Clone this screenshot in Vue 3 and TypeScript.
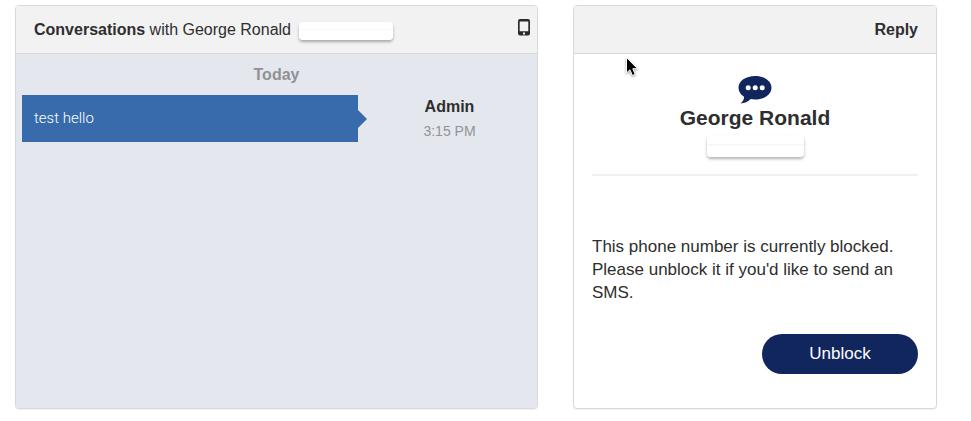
<script setup lang="ts">
import { ref } from 'vue'

interface Message {
  id: number
  text: string
  author: string
  time: string
}

const contact = 'George Ronald'
const messages = ref<Message[]>([
  { id: 1, text: 'test hello', author: 'Admin', time: '3:15 PM' },
])
</script>

<template>
  <main class="page">
    <section class="panel conversation">
      <header class="panel-head">
        <h1 class="title">
          <strong>Conversations</strong> with {{ contact }}
        </h1>
        <span class="redacted"></span>
        <svg class="phone" viewBox="0 0 12 17" aria-hidden="true">
          <path
            fill="#2b2b2b"
            fill-rule="evenodd"
            d="M2 0h8a2 2 0 0 1 2 2v12.500a2 2 0 0 1-2 2H2a2 2 0 0 1-2-2V2a2 2 0 0 1 2-2zM1.700 2.500v9.800h8.600V2.500zM5 13.400v2h2v-2z"
          />
        </svg>
      </header>
      <div class="thread">
        <h2 class="day">Today</h2>
        <article v-for="message in messages" :key="message.id" class="message">
          <p class="bubble">{{ message.text }}</p>
          <div class="meta">
            <strong class="author">{{ message.author }}</strong>
            <time class="time">{{ message.time }}</time>
          </div>
        </article>
      </div>
    </section>

    <section class="panel reply">
      <header class="panel-head panel-head-end">
        <h2 class="title"><strong>Reply</strong></h2>
      </header>
      <div class="reply-body">
        <div class="contact">
          <svg class="chat" viewBox="0 0 34 28" aria-hidden="true">
            <path
              fill="#12265e"
              d="M17 0C26.200 0 33.500 5 33.500 11.700S26.200 23.500 17 23.500c-1.500 0-2.900-.1-4.200-.4C10 25.800 6.600 27.500 2.700 27.500c1.900-1.700 3.400-4 3.400-6.700C2.600 18.600.5 15.400.5 11.700.5 5 7.800 0 17 0z"
            />
            <g fill="#fff">
              <circle cx="10.200" cy="11.800" r="2.500" />
              <circle cx="17.200" cy="11.800" r="2.500" />
              <circle cx="24.200" cy="11.800" r="2.500" />
            </g>
          </svg>
          <h3 class="contact-name">{{ contact }}</h3>
          <span class="redacted redacted-tall"></span>
        </div>
        <p class="notice">
          This phone number is currently blocked. Please unblock it if you'd
          like to send an SMS.
        </p>
        <button type="button" class="unblock">Unblock</button>
      </div>
    </section>

    <svg class="pointer" viewBox="0 0 14 22" aria-hidden="true">
      <path
        fill="#000"
        stroke="#fff"
        stroke-width="1"
        d="M1.500 1.500v15.500l3.400-3.200 2.500 5.700 2.800-1.200-2.400-5.600h4.700z"
      />
    </svg>
  </main>
</template>

<style>
body {
  margin: 0;
  background: #fff;
}
</style>

<style scoped>
.page {
  position: relative;
  box-sizing: border-box;
  min-height: 100vh;
  display: grid;
  grid-template-columns: 523fr 364fr;
  gap: 35px;
  padding: 5px 34px 12px 15px;
  font-family: "Liberation Sans", Arial, sans-serif;
  font-size: 16px;
  color: #2e2e2e;
}

.panel {
  display: flex;
  flex-direction: column;
  min-width: 0;
  border: 1px solid #d9d9d9;
  border-radius: 4px;
  box-shadow: 0 1px 1px rgba(0, 0, 0, 0.06);
  overflow: hidden;
  background: #fff;
}

.panel-head {
  display: flex;
  align-items: center;
  gap: 8px;
  height: 47px;
  padding: 0 7px 0 18px;
  border-bottom: 1px solid #d6d7d9;
  background: #f2f2f2;
}

.panel-head-end {
  justify-content: flex-end;
  padding-right: 18px;
}

.title {
  margin: 0;
  font-size: 16px;
  font-weight: 400;
  line-height: 24px;
}

.redacted {
  box-sizing: border-box;
  width: 94px;
  height: 18px;
  margin-top: 2px;
  border-radius: 4px;
  background: linear-gradient(#fff 7px, #f7f7f7 7px, #fff 9px);
  box-shadow: 0 2px 3px rgba(0, 0, 0, 0.3);
}

.phone {
  width: 12px;
  height: 17px;
  margin: 0 0 4px auto;
}

.thread {
  flex: 1;
  padding: 9px 0 0 6px;
  background: #e4e7ee;
}

.day {
  margin: 0 6px 8px 0;
  font-size: 16px;
  line-height: 24px;
  text-align: center;
  color: #909193;
}

.message {
  display: grid;
  grid-template-columns: 336fr 175fr;
  gap: 4px;
  align-items: start;
}

.bubble {
  position: relative;
  margin: 0;
  padding: 12px;
  font-family: Roboto, "Liberation Sans", sans-serif;
  font-size: 15px;
  font-weight: 300;
  line-height: 23px;
  color: #fff;
  background: #376bac;
}

.bubble::after {
  content: "";
  position: absolute;
  top: 50%;
  left: 100%;
  border: 9px solid transparent;
  border-left-color: #376bac;
  border-right-width: 0;
  transform: translateY(-50%);
}

.meta {
  display: flex;
  flex-direction: column;
  align-items: center;
}

.author {
  line-height: 24px;
}

.time {
  font-size: 14px;
  line-height: 24px;
  color: #929396;
}

.reply-body {
  display: flex;
  flex: 1;
  flex-direction: column;
  padding: 22px 18px 34px;
}

.contact {
  display: flex;
  flex-direction: column;
  align-items: center;
  padding-bottom: 17px;
  border-bottom: 2px solid #f0f0f0;
}

.chat {
  width: 34px;
  height: 28px;
}

.contact-name {
  margin: 0;
  font-size: 21px;
  line-height: 27px;
}

.redacted-tall {
  width: 97px;
  height: 22px;
  margin-top: 4px;
  background: linear-gradient(#fff 9px, #f3f3f3 9px, #fff 11px);
}

.notice {
  margin: 59px 0 30px;
  font-size: 17px;
  line-height: 23px;
}

.unblock {
  align-self: flex-end;
  width: 156px;
  height: 40px;
  border: 0;
  border-radius: 20px;
  font: 17px "Liberation Sans", Arial, sans-serif;
  color: #fff;
  background: #12265e;
  cursor: pointer;
}

.pointer {
  position: absolute;
  top: 56px;
  left: 625px;
  width: 14px;
  height: 22px;
  filter: drop-shadow(0 1px 1px rgba(0, 0, 0, 0.4));
}
</style>
